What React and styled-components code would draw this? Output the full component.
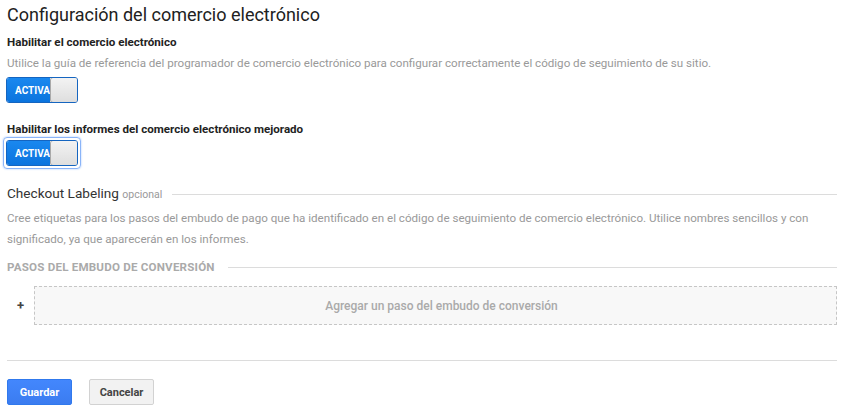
import React from "react";
import styled, { createGlobalStyle } from "styled-components";

const GlobalStyle = createGlobalStyle`
  body {
    margin: 0;
    background: #fff;
    font-family: Roboto, "Liberation Sans", Arial, sans-serif;
    color: #222;
  }
`;

const Page = styled.div`
  padding: 3px 9px 0 7px;
`;

const Title = styled.h1`
  margin: 0;
  font-size: 18px;
  font-weight: 400;
  line-height: 24px;
  color: #212121;
`;

const Label = styled.div`
  margin-top: ${(p) => p.top || 0}px;
  font-size: 11.6px;
  font-weight: 700;
  line-height: 16px;
  color: #222;
`;

const Help = styled.p`
  margin: ${(p) => p.top || 0}px 0 0;
  font-size: 11.6px;
  line-height: 21px;
  color: #999;
`;

const ToggleWrap = styled.div`
  display: inline-flex;
  margin: ${(p) => (p.focused ? "0 0 0 -4px" : "3px 0 0 -1px")};
  padding: ${(p) => (p.focused ? "2px" : "0")};
  border: ${(p) => (p.focused ? "1px solid #8ab4f8" : "none")};
  border-radius: 4px;
  box-shadow: ${(p) => (p.focused ? "0 0 2px #9cc2ff" : "none")};
`;

const Toggle = styled.div`
  display: flex;
  width: 72px;
  height: 26px;
  border-radius: 3px;
  overflow: hidden;
  border: 1px solid #1565c0;
  box-sizing: border-box;
`;

const ToggleOn = styled.span`
  flex: 0 0 43px;
  display: flex;
  align-items: center;
  padding-left: 8px;
  box-sizing: border-box;
  background: linear-gradient(#1a88ef, #0b74de);
  color: #fff;
  font-size: 10px;
  font-weight: 700;
  white-space: nowrap;
`;

const Knob = styled.span`
  flex: 1;
  background: linear-gradient(#f3f3f3, #dedede);
  border: 1px solid #a9a9a9;
  border-radius: 3px;
  margin: -1px -1px -1px 0;
`;

const SectionHead = styled.div`
  display: flex;
  align-items: center;
  margin-top: ${(p) => p.top || 0}px;
  gap: ${(p) => p.gap || 10}px;
  &::after {
    content: "";
    flex: 1;
    height: 1px;
    background: #dcdcdc;
  }
`;

const SectionTitle = styled.span`
  font-size: 13.6px;
  color: #333;
  line-height: 18px;
  small {
    font-size: 10.5px;
    color: #999;
  }
`;

const SubTitle = styled.span`
  font-size: 11.6px;
  font-weight: 700;
  color: #aaa;
  line-height: 16px;
  letter-spacing: 0.2px;
`;

const StepRow = styled.div`
  display: flex;
  align-items: center;
  margin-top: 11px;
`;

const Plus = styled.span`
  width: 27px;
  text-align: center;
  font-size: 13px;
  font-weight: 700;
  color: #444;
`;

const AddStep = styled.div`
  flex: 1;
  height: 37px;
  display: flex;
  align-items: center;
  justify-content: center;
  padding-left: 12px;
  border: 1px dashed #c6c6c6;
  background: #f8f8f8;
  color: #aaa;
  font-size: 12px;
  font-weight: 500;
`;

const Divider = styled.hr`
  margin: 35px 0 0;
  border: none;
  border-top: 1px solid #dcdcdc;
`;

const Actions = styled.div`
  display: flex;
  gap: 17px;
  margin-top: 18px;
`;

const Button = styled.button`
  height: 26px;
  width: 65px;
  padding: 0;
  border-radius: 2px;
  font-family: inherit;
  font-size: 11px;
  font-weight: 700;
  border: 1px solid ${(p) => (p.primary ? "#3079ed" : "#d2d2d2")};
  background: ${(p) => (p.primary ? "linear-gradient(#4387fd, #3b7cf0)" : "#f2f2f2")};
  color: ${(p) => (p.primary ? "#fff" : "#444")};
`;

function Switch({ focused }) {
  return (
    <ToggleWrap focused={focused}>
      <Toggle>
        <ToggleOn>ACTIVA</ToggleOn>
        <Knob />
      </Toggle>
    </ToggleWrap>
  );
}

export default function App() {
  return (
    <Page>
      <GlobalStyle />
      <Title>Configuración del comercio electrónico</Title>
      <Label top={7}>Habilitar el comercio electrónico</Label>
      <Help top={3}>
        Utilice la guía de referencia del programador de comercio electrónico para
        configurar correctamente el código de seguimiento de su sitio.
      </Help>
      <div>
        <Switch />
      </div>
      <Label top={18}>Habilitar los informes del comercio electrónico mejorado</Label>
      <div>
        <Switch focused />
      </div>
      <SectionHead top={15}>
        <SectionTitle>
          Checkout Labeling <small>opcional</small>
        </SectionTitle>
      </SectionHead>
      <Help top={4}>
        Cree etiquetas para los pasos del embudo de pago que ha identificado en el
        código de seguimiento de comercio electrónico. Utilice nombres sencillos y
        con significado, ya que aparecerán en los informes.
      </Help>
      <SectionHead top={9} gap={13}>
        <SubTitle>PASOS DEL EMBUDO DE CONVERSIÓN</SubTitle>
      </SectionHead>
      <StepRow>
        <Plus>+</Plus>
        <AddStep>Agregar un paso del embudo de conversión</AddStep>
      </StepRow>
      <Divider />
      <Actions>
        <Button primary>Guardar</Button>
        <Button>Cancelar</Button>
      </Actions>
    </Page>
  );
}
